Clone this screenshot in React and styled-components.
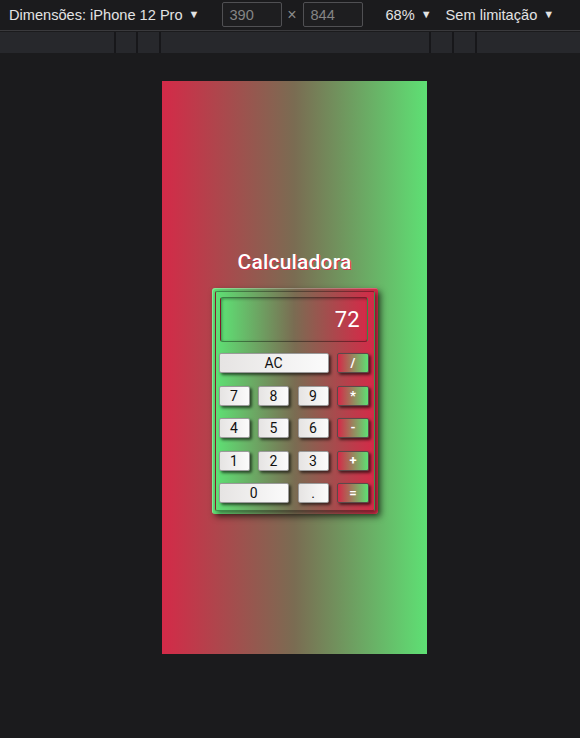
import React, { useState } from 'react';
import styled, { createGlobalStyle } from 'styled-components';

const RED = '#d42a48';
const GREEN = '#5ee074';

const GlobalStyle = createGlobalStyle`
  html, body {
    margin: 0;
    padding: 0;
    background: #1c1c1e;
    width: 580px;
    height: 738px;
    overflow: hidden;
  }
`;

const Page = styled.div`
  width: 580px;
  height: 738px;
  background: #1b1b1d;
  display: flex;
  flex-direction: column;
  font-family: "Liberation Sans", Arial, sans-serif;
`;

const Toolbar = styled.div`
  height: 31px;
  box-sizing: border-box;
  display: flex;
  align-items: center;
  padding: 0 0 1px 9px;
  color: #e3e3e3;
  font-size: 14.6px;
  border-bottom: 1px solid #3a3a3d;
  margin-bottom: 1px;
`;

const Label = styled.span`
  display: inline-flex;
  align-items: center;
  gap: 6px;
  margin-left: ${(p) => p.$ml || 0}px;
`;

const Caret = styled.span`
  font-size: 11px;
  transform: translateY(-1px);
`;

const SizeInput = styled.div`
  width: 60px;
  height: 25px;
  box-sizing: border-box;
  border: 1px solid #505053;
  border-radius: 2px;
  background: #1e1e20;
  color: #858585;
  padding-left: 7px;
  display: flex;
  align-items: center;
  margin-left: ${(p) => p.$ml || 0}px;
`;

const Times = styled.span`
  color: #8a8a8a;
  width: 21px;
  text-align: center;
  font-size: 16px;
`;

const Ruler = styled.div`
  height: 21px;
  background: #27282c;
  display: flex;
`;

const RulerCell = styled.div`
  box-sizing: border-box;
  width: ${(p) => p.$w}px;
  flex: ${(p) => (p.$grow ? 1 : 'none')};
  border-right: ${(p) => (p.$last ? 'none' : '2px solid #17171a')};
`;

const Viewport = styled.div`
  flex: 1;
  display: flex;
  justify-content: center;
  padding-top: 28px;
  padding-left: 9px;
`;

const Device = styled.div`
  width: 265px;
  height: 573px;
  background: linear-gradient(to right, ${RED}, #7a6c52 50%, ${GREEN});
  display: flex;
  flex-direction: column;
  align-items: center;
  padding-top: 169px;
  box-sizing: border-box;
  font-family: Roboto, "DejaVu Sans", sans-serif;
`;

const Title = styled.h1`
  margin: 0 0 13px 0;
  font-size: 21px;
  font-weight: 500;
  line-height: 25px;
  color: #fff;
  text-shadow: 1px 1px 0 ${RED};
  letter-spacing: 0.2px;
`;

const Calculator = styled.div`
  width: 166px;
  box-sizing: border-box;
  padding: 3px;
  border-radius: 3px;
  background: linear-gradient(to right, ${GREEN}, #7a6c52 50%, ${RED});
  box-shadow: 3px 3px 6px rgba(0, 0, 0, 0.55), inset 1px 1px 0 rgba(255, 255, 255, 0.25);
`;

const Body = styled.div`
  border: 1px solid rgba(0, 0, 0, 0.35);
  border-radius: 2px;
  padding: 5px 2px 7px 3px;
  background: linear-gradient(to right, ${GREEN}, #7a6c52 50%, ${RED});
  box-shadow: 2px 2px 4px rgba(0, 0, 0, 0.45);
`;

const Display = styled.div`
  height: 45px;
  margin: 0 4px 0 1px;
  box-sizing: border-box;
  border: 1px solid rgba(0, 0, 0, 0.4);
  border-radius: 3px;
  background: linear-gradient(to right, ${GREEN}, #7a6c52 50%, ${RED});
  box-shadow: inset 1px 1px 3px rgba(0, 0, 0, 0.35);
  color: #fff;
  font-size: 22px;
  display: flex;
  align-items: center;
  justify-content: flex-end;
  padding-right: 7px;
`;

const Keys = styled.div`
  margin-top: 11px;
  display: grid;
  grid-template-columns: 31px 31px 31px 32px;
  grid-template-rows: repeat(5, 20px);
  column-gap: 8.5px;
  row-gap: 12.5px;
`;

const Key = styled.button`
  grid-column: span ${(p) => p.$span || 1};
  margin: 0;
  padding: 0;
  box-sizing: border-box;
  border: 1px solid ${(p) => (p.$op ? '#5a4a4a' : '#9a9a9a')};
  border-radius: 2px;
  font-family: Roboto, "DejaVu Sans", sans-serif;
  font-size: ${(p) => (p.$op ? '13px' : '14px')};
  font-weight: ${(p) => (p.$op ? 700 : 400)};
  color: ${(p) => (p.$op ? '#fff' : '#111')};
  background: ${(p) =>
    p.$op
      ? `linear-gradient(to right, ${RED}, ${GREEN})`
      : 'linear-gradient(to right, #e6e4e3, #fbfbfb)'};
  box-shadow: 2px 2px 3px rgba(0, 0, 0, 0.6);
  line-height: 18px;
  cursor: pointer;
`;

const rows = [
  [{ k: 'AC', span: 3 }, { k: '/', op: true }],
  [{ k: '7' }, { k: '8' }, { k: '9' }, { k: '*', op: true }],
  [{ k: '4' }, { k: '5' }, { k: '6' }, { k: '-', op: true }],
  [{ k: '1' }, { k: '2' }, { k: '3' }, { k: '+', op: true }],
  [{ k: '0', span: 2 }, { k: '.' }, { k: '=', op: true }],
];

export default function App() {
  const [value, setValue] = useState('72');

  const press = (k) => {
    if (k === 'AC') return setValue('0');
    if (k === '=') {
      try {
        // eslint-disable-next-line no-new-func
        setValue(String(Function(`return (${value})`)()));
      } catch (e) {
        setValue('Erro');
      }
      return;
    }
    setValue((v) => (v === '0' ? k : v + k));
  };

  return (
    <Page>
      <GlobalStyle />
      <Toolbar>
        <Label>
          Dimensões: iPhone 12 Pro <Caret>▼</Caret>
        </Label>
        <SizeInput $ml={22}>390</SizeInput>
        <Times>×</Times>
        <SizeInput>844</SizeInput>
        <Label $ml={23}>
          68% <Caret>▼</Caret>
        </Label>
        <Label $ml={14}>
          Sem limitação <Caret>▼</Caret>
        </Label>
      </Toolbar>
      <Ruler>
        <RulerCell $w={116} />
        <RulerCell $w={22} />
        <RulerCell $w={23} />
        <RulerCell $w={270} />
        <RulerCell $w={23} />
        <RulerCell $w={23} />
        <RulerCell $grow $last />
      </Ruler>
      <Viewport>
        <Device>
          <Title>Calculadora</Title>
          <Calculator>
            <Body>
              <Display>{value}</Display>
              <Keys>
                {rows.flat().map(({ k, span, op }) => (
                  <Key key={k} $span={span} $op={op} onClick={() => press(k)}>
                    {k}
                  </Key>
                ))}
              </Keys>
            </Body>
          </Calculator>
        </Device>
      </Viewport>
    </Page>
  );
}
